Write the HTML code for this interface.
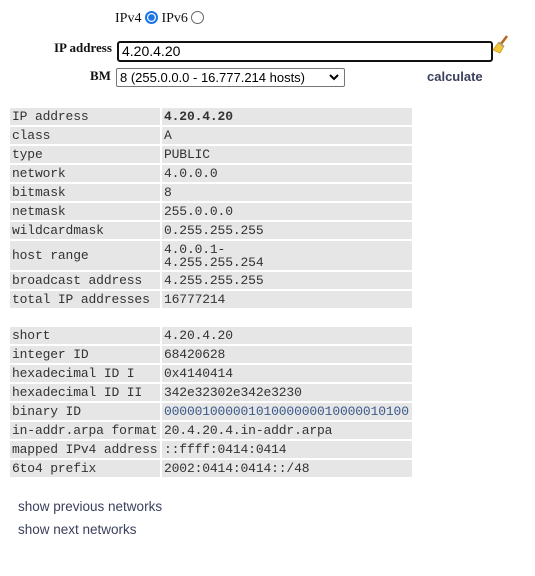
<!DOCTYPE html>
<html><head><meta charset="utf-8"><style>
body{margin:0;width:535px;height:576px;background:#fff;position:relative;font-family:"Liberation Serif",serif;}
.a{position:absolute;}
table{position:absolute;left:10px;border-collapse:separate;border-spacing:0 2px;font-family:"Liberation Mono",monospace;font-size:13px;color:#333;letter-spacing:-0.15px;}
td{background:#e6e6e6;padding:0 2px;height:17px;line-height:14px;vertical-align:middle;}
td:first-child{width:146px;border-right:2px solid #fff;}
td:last-child{width:246px;}
.lk{font-family:"Liberation Sans",sans-serif;font-size:13.5px;color:#3a3f5c;}
.radio{display:inline-block;width:13px;height:13px;border-radius:50%;vertical-align:-2px;box-sizing:border-box;}
</style></head><body>
<div class="a" style="left:115px;top:11px;font-size:14px;color:#111;">IPv4 <span class="radio" style="background:radial-gradient(circle,#1a73e8 3px,#fff 3.5px);border:2px solid #1a73e8"></span> IPv6 <span class="radio" style="border:1px solid #666;"></span></div>
<div class="a" style="left:54px;top:40px;font-size:13px;font-weight:bold;color:#111;">IP address</div>
<div class="a" style="left:117px;top:41px;width:369px;height:17px;border:2px solid #111;border-radius:3px;font-family:'Liberation Sans',sans-serif;font-size:14px;line-height:17px;padding-left:3px;">4.20.4.20</div>
<svg class="a" style="left:492px;top:35px" width="18" height="20" viewBox="0 0 18 20"><path d="M15 1 L9 9" stroke="#b5651d" stroke-width="2.5"/><path d="M7 7 L12 11 L8 18 L1 15 Z" fill="#f2c73a" stroke="#c99a1a" stroke-width="0.8"/><path d="M7 7 L12 11 L11 12 L6 8Z" fill="#a0a0a0"/></svg>
<div class="a" style="left:90px;top:68px;font-size:13px;font-weight:bold;color:#111;">BM</div>
<div class="a" style="left:116px;top:68px;height:17px;border:1px solid #767676;border-radius:2px;font-family:'Liberation Sans',sans-serif;font-size:13px;line-height:17px;padding-left:3px;width:224px;">8 (255.0.0.0 - 16.777.214 hosts)<svg style="position:absolute;right:5px;top:5px" width="10" height="7" viewBox="0 0 10 7"><path d="M1 1 L5 5 L9 1" stroke="#000" stroke-width="2" fill="none"/></svg></div>
<div class="a lk" style="left:427px;top:69px;font-weight:bold;font-size:13px;">calculate</div>
<table style="top:106px;">
<tr><td>IP address</td><td><b>4.20.4.20</b></td></tr>
<tr><td>class</td><td>A</td></tr>
<tr><td>type</td><td>PUBLIC</td></tr>
<tr><td>network</td><td>4.0.0.0</td></tr>
<tr><td>bitmask</td><td>8</td></tr>
<tr><td>netmask</td><td>255.0.0.0</td></tr>
<tr><td>wildcardmask</td><td>0.255.255.255</td></tr>
<tr><td style="height:29px">host range</td><td style="height:29px;line-height:13px">4.0.0.1-<br>4.255.255.254</td></tr>
<tr><td>broadcast address</td><td>4.255.255.255</td></tr>
<tr><td>total IP addresses</td><td>16777214</td></tr>
</table>
<table style="top:325px;">
<tr><td>short</td><td>4.20.4.20</td></tr>
<tr><td>integer ID</td><td>68420628</td></tr>
<tr><td>hexadecimal ID I</td><td>0x4140414</td></tr>
<tr><td>hexadecimal ID II</td><td>342e32302e342e3230</td></tr>
<tr><td>binary ID</td><td style="color:#3a5a8a">00000100000101000000010000010100</td></tr>
<tr><td>in-addr.arpa format</td><td>20.4.20.4.in-addr.arpa</td></tr>
<tr><td>mapped IPv4 address</td><td>::ffff:0414:0414</td></tr>
<tr><td>6to4 prefix</td><td>2002:0414:0414::/48</td></tr>
</table>
<div class="a lk" style="left:18px;top:499px;">show previous networks</div>
<div class="a lk" style="left:18px;top:522px;">show next networks</div>
</body></html>
